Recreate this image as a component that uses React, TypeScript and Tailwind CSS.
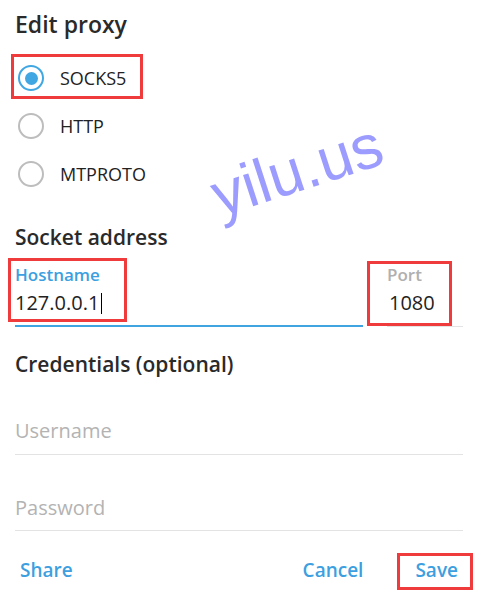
import React from 'react';

const RED = 'absolute border-[3px] border-[#ef3b3b] pointer-events-none';

function Radio({ label, checked }: { label: string; checked?: boolean }) {
  return (
    <div className="flex items-center h-[48px]">
      <span
        className={`ml-[3px] w-[26px] h-[26px] rounded-full border-[2.5px] flex items-center justify-center ${
          checked ? 'border-[#40a7e3]' : 'border-[#bdbdbd]'
        }`}
      >
        {checked && <span className="w-[13px] h-[13px] rounded-full bg-[#40a7e3]" />}
      </span>
      <span className="ml-[16px] text-[18px] leading-[26px] text-[#222]">{label}</span>
    </div>
  );
}

export default function App() {
  return (
    <div className="relative w-[487px] h-[595px] bg-white overflow-hidden font-['Open_Sans',sans-serif]">
      <div className="pl-[15px] pr-[24px] pt-[9px]">
        <div className="text-[23px] leading-[30px] font-semibold text-[#2a2a2a]">Edit proxy</div>

        <div className="mt-[15px] flex flex-col">
          <Radio label="SOCKS5" checked />
          <Radio label="HTTP" />
          <Radio label="MTPROTO" />
        </div>

        <div className="mt-[25px] text-[21px] leading-[28px] font-semibold text-[#2a2a2a]">Socket address</div>

        <div className="mt-[14px] flex gap-[24px]">
          <div className="flex-1 border-b-2 border-[#40a4e0] pb-[8px]">
            <div className="text-[17px] leading-[20px] font-semibold text-[#3d9fdf]">Hostname</div>
            <div className="mt-[4px] flex items-center text-[20px] leading-[28px] text-[#222]">
              127.0.0.1
              <span className="ml-[2px] w-px h-[21px] bg-black" />
            </div>
          </div>
          <div className="w-[76px] border-b border-[#e3e3e3] pb-[9px]">
            <div className="text-[17px] leading-[20px] font-semibold text-[#b0b0b0]">Port</div>
            <div className="mt-[4px] pl-[2px] text-[20px] leading-[28px] text-[#222]">1080</div>
          </div>
        </div>

        <div className="mt-[23px] text-[21px] leading-[28px] font-semibold text-[#2a2a2a]">Credentials (optional)</div>

        <div className="mt-[39px] border-b border-[#e3e3e3] pb-[9px] text-[20px] leading-[28px] text-[#b3b3b3]">Username</div>
        <div className="mt-[39px] border-b border-[#e3e3e3] pb-[8px] text-[20px] leading-[28px] text-[#b3b3b3]">Password</div>

        <div className="mt-[26px] flex items-center justify-between text-[19px] leading-[26px] font-semibold text-[#3d9fdf]">
          <span className="ml-[5px]">Share</span>
          <div className="flex gap-[52px] mr-[5px]">
            <span>Cancel</span>
            <span>Save</span>
          </div>
        </div>
      </div>

      {/* annotation boxes */}
      <div className={`${RED} left-[11px] top-[54px] w-[132px] h-[45px]`} />
      <div className={`${RED} left-[8px] top-[258px] w-[119px] h-[64px]`} />
      <div className={`${RED} left-[367px] top-[261px] w-[85px] h-[65px]`} />
      <div className={`${RED} left-[397px] top-[553px] w-[76px] h-[37px]`} />

      {/* watermark */}
      <div className="absolute left-[209px] top-[139px] -rotate-[18deg] text-[62px] leading-none text-[#9c9cff] font-['Liberation_Sans',Arial,sans-serif] pointer-events-none">
        yilu.us
      </div>
    </div>
  );
}
